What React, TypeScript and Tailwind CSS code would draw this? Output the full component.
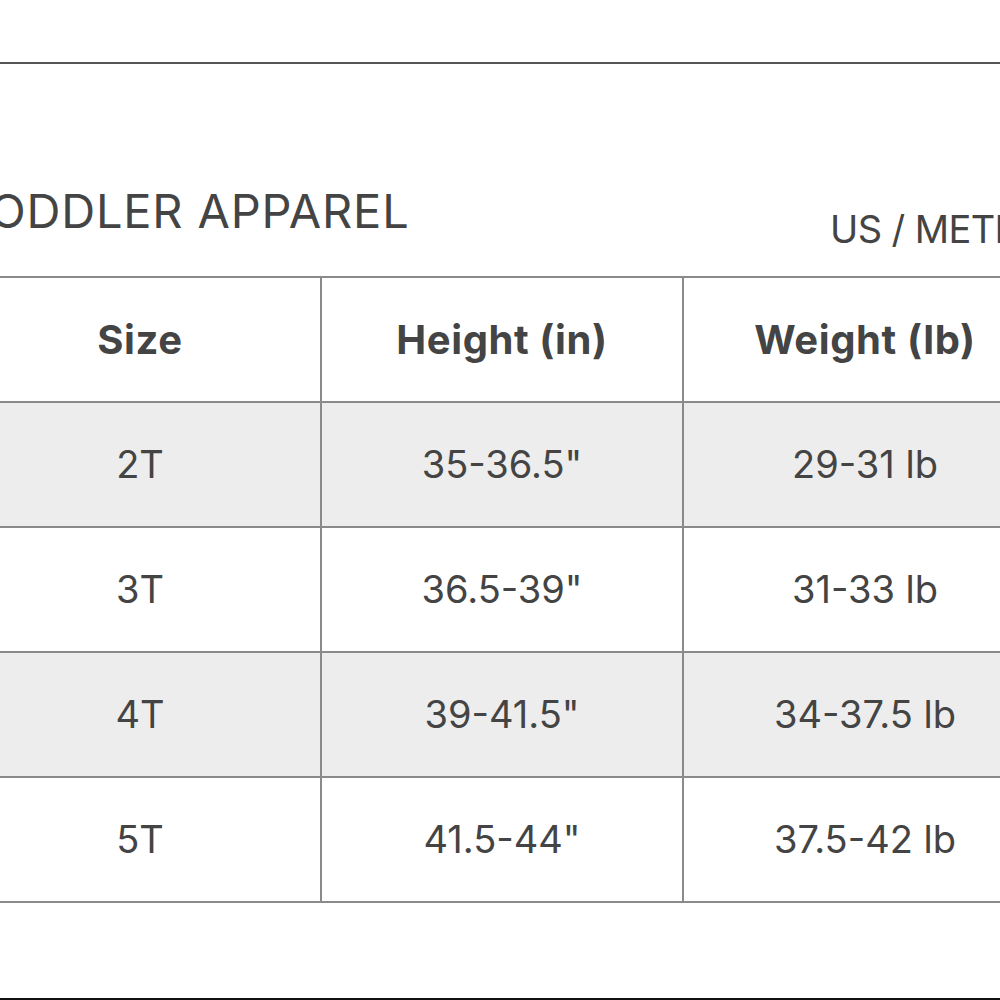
const rows = [
  { size: "2T", height: "35-36.5\"", weight: "29-31 lb", shade: true },
  { size: "3T", height: "36.5-39\"", weight: "31-33 lb", shade: false },
  { size: "4T", height: "39-41.5\"", weight: "34-37.5 lb", shade: true },
  { size: "5T", height: "41.5-44\"", weight: "37.5-42 lb", shade: false },
];

export default function App() {
  return (
    <div
      className="w-[1000px] h-[1000px] overflow-hidden bg-white text-[#444] flex flex-col"
      style={{ fontFamily: "Inter, 'Noto Sans', sans-serif" }}
    >
      <div className="h-[62px] shrink-0" />
      <div className="h-[2px] bg-[#555] shrink-0" />

      <div className="-ml-[40px] w-[1086px] shrink-0">
        <div className="h-[212px] flex items-end">
          <h1 className="text-[47px] leading-none pb-[42px] tracking-[0.8px]">TODDLER APPAREL</h1>
          <div className="ml-auto w-[216px] shrink-0 whitespace-nowrap text-[38px] leading-none pb-[28px] tracking-[-0.6px]">US / METRIC</div>
        </div>

        <div className="border-t-2 border-[#8a8a8a]">
          <div className="grid grid-cols-[362px_362px_362px] h-[125px] border-b-2 border-[#8a8a8a] font-bold text-[40px] tracking-[0.6px]">
            <div className="flex items-center justify-center border-r-2 border-[#8a8a8a]">Size</div>
            <div className="flex items-center justify-center border-r-2 border-[#8a8a8a]">Height (in)</div>
            <div className="flex items-center justify-center">Weight (lb)</div>
          </div>
          {rows.map((r) => (
            <div
              key={r.size}
              className={`grid grid-cols-[362px_362px_362px] h-[125px] border-b-2 border-[#8a8a8a] text-[38px] ${r.shade ? "bg-[#ededed]" : "bg-white"}`}
            >
              <div className="flex items-center justify-center border-r-2 border-[#8a8a8a]">{r.size}</div>
              <div className="flex items-center justify-center border-r-2 border-[#8a8a8a]">{r.height}</div>
              <div className="flex items-center justify-center">{r.weight}</div>
            </div>
          ))}
        </div>
      </div>

      <div className="flex-1" />
      <div className="h-[2px] bg-[#111] shrink-0" />
    </div>
  );
}
